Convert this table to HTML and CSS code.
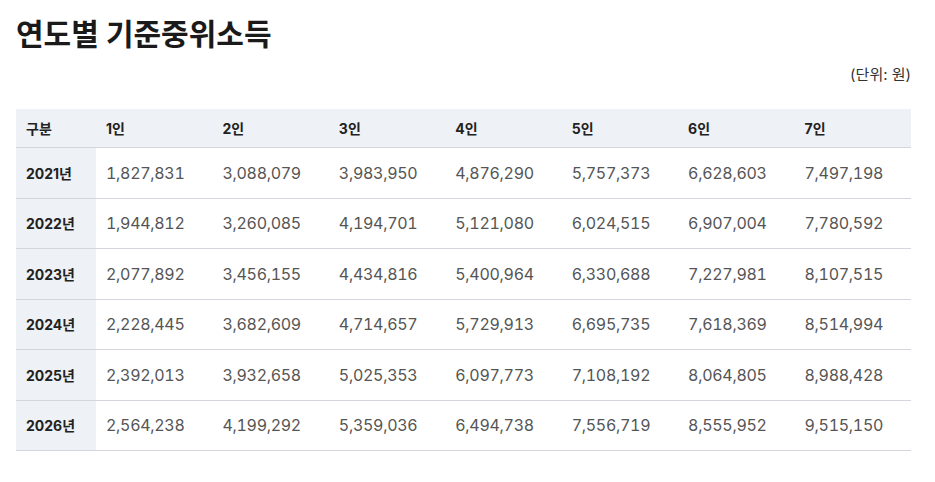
FILE: index.html
```html
<!DOCTYPE html>
<html lang="ko">
<head>
<meta charset="utf-8">
<link rel="stylesheet" href="styles.css">
</head>
<body>
<div class="page">
  <h1 class="title">연도별 기준중위소득</h1>
  <div class="unit">(단위: 원)</div>
  <table class="income">
    <thead>
      <tr><th>구분</th><th>1인</th><th>2인</th><th>3인</th><th>4인</th><th>5인</th><th>6인</th><th>7인</th></tr>
    </thead>
    <tbody>
      <tr><th>2021년</th><td>1,827,831</td><td>3,088,079</td><td>3,983,950</td><td>4,876,290</td><td>5,757,373</td><td>6,628,603</td><td>7,497,198</td></tr>
      <tr><th>2022년</th><td>1,944,812</td><td>3,260,085</td><td>4,194,701</td><td>5,121,080</td><td>6,024,515</td><td>6,907,004</td><td>7,780,592</td></tr>
      <tr><th>2023년</th><td>2,077,892</td><td>3,456,155</td><td>4,434,816</td><td>5,400,964</td><td>6,330,688</td><td>7,227,981</td><td>8,107,515</td></tr>
      <tr><th>2024년</th><td>2,228,445</td><td>3,682,609</td><td>4,714,657</td><td>5,729,913</td><td>6,695,735</td><td>7,618,369</td><td>8,514,994</td></tr>
      <tr><th>2025년</th><td>2,392,013</td><td>3,932,658</td><td>5,025,353</td><td>6,097,773</td><td>7,108,192</td><td>8,064,805</td><td>8,988,428</td></tr>
      <tr><th>2026년</th><td>2,564,238</td><td>4,199,292</td><td>5,359,036</td><td>6,494,738</td><td>7,556,719</td><td>8,555,952</td><td>9,515,150</td></tr>
    </tbody>
  </table>
</div>
</body>
</html>
```
FILE: styles.css
```css
html, body { margin: 0; padding: 0; background: #fff; }
body { font-family: Inter, "Noto Sans CJK KR", sans-serif; color: #222; }
.page { padding: 12px 24px 0 16px; }
.title { margin: 0; font-size: 30px; font-weight: 700; line-height: 44px; color: #1a1a1a; }
.unit { text-align: right; font-size: 15px; color: #333; line-height: 20px; margin-top: 9px; margin-bottom: 24px; }
.income { width: 100%; border-collapse: collapse; table-layout: fixed; }
.income th, .income td { text-align: left; border-bottom: 1px solid #d3d6dc; padding: 0 10px; }
.income thead th { background: #eef1f5; height: 38px; font-size: 14px; font-weight: 700; color: #222; }
.income thead th:first-child { width: 60px; }
.income tbody th { background: #eef1f5; font-size: 14px; font-weight: 700; color: #222; height: 49.5px; }
.income tbody td { font-size: 16px; color: #555; height: 49.5px; font-variant-numeric: tabular-nums; letter-spacing: -0.3px; }
```
